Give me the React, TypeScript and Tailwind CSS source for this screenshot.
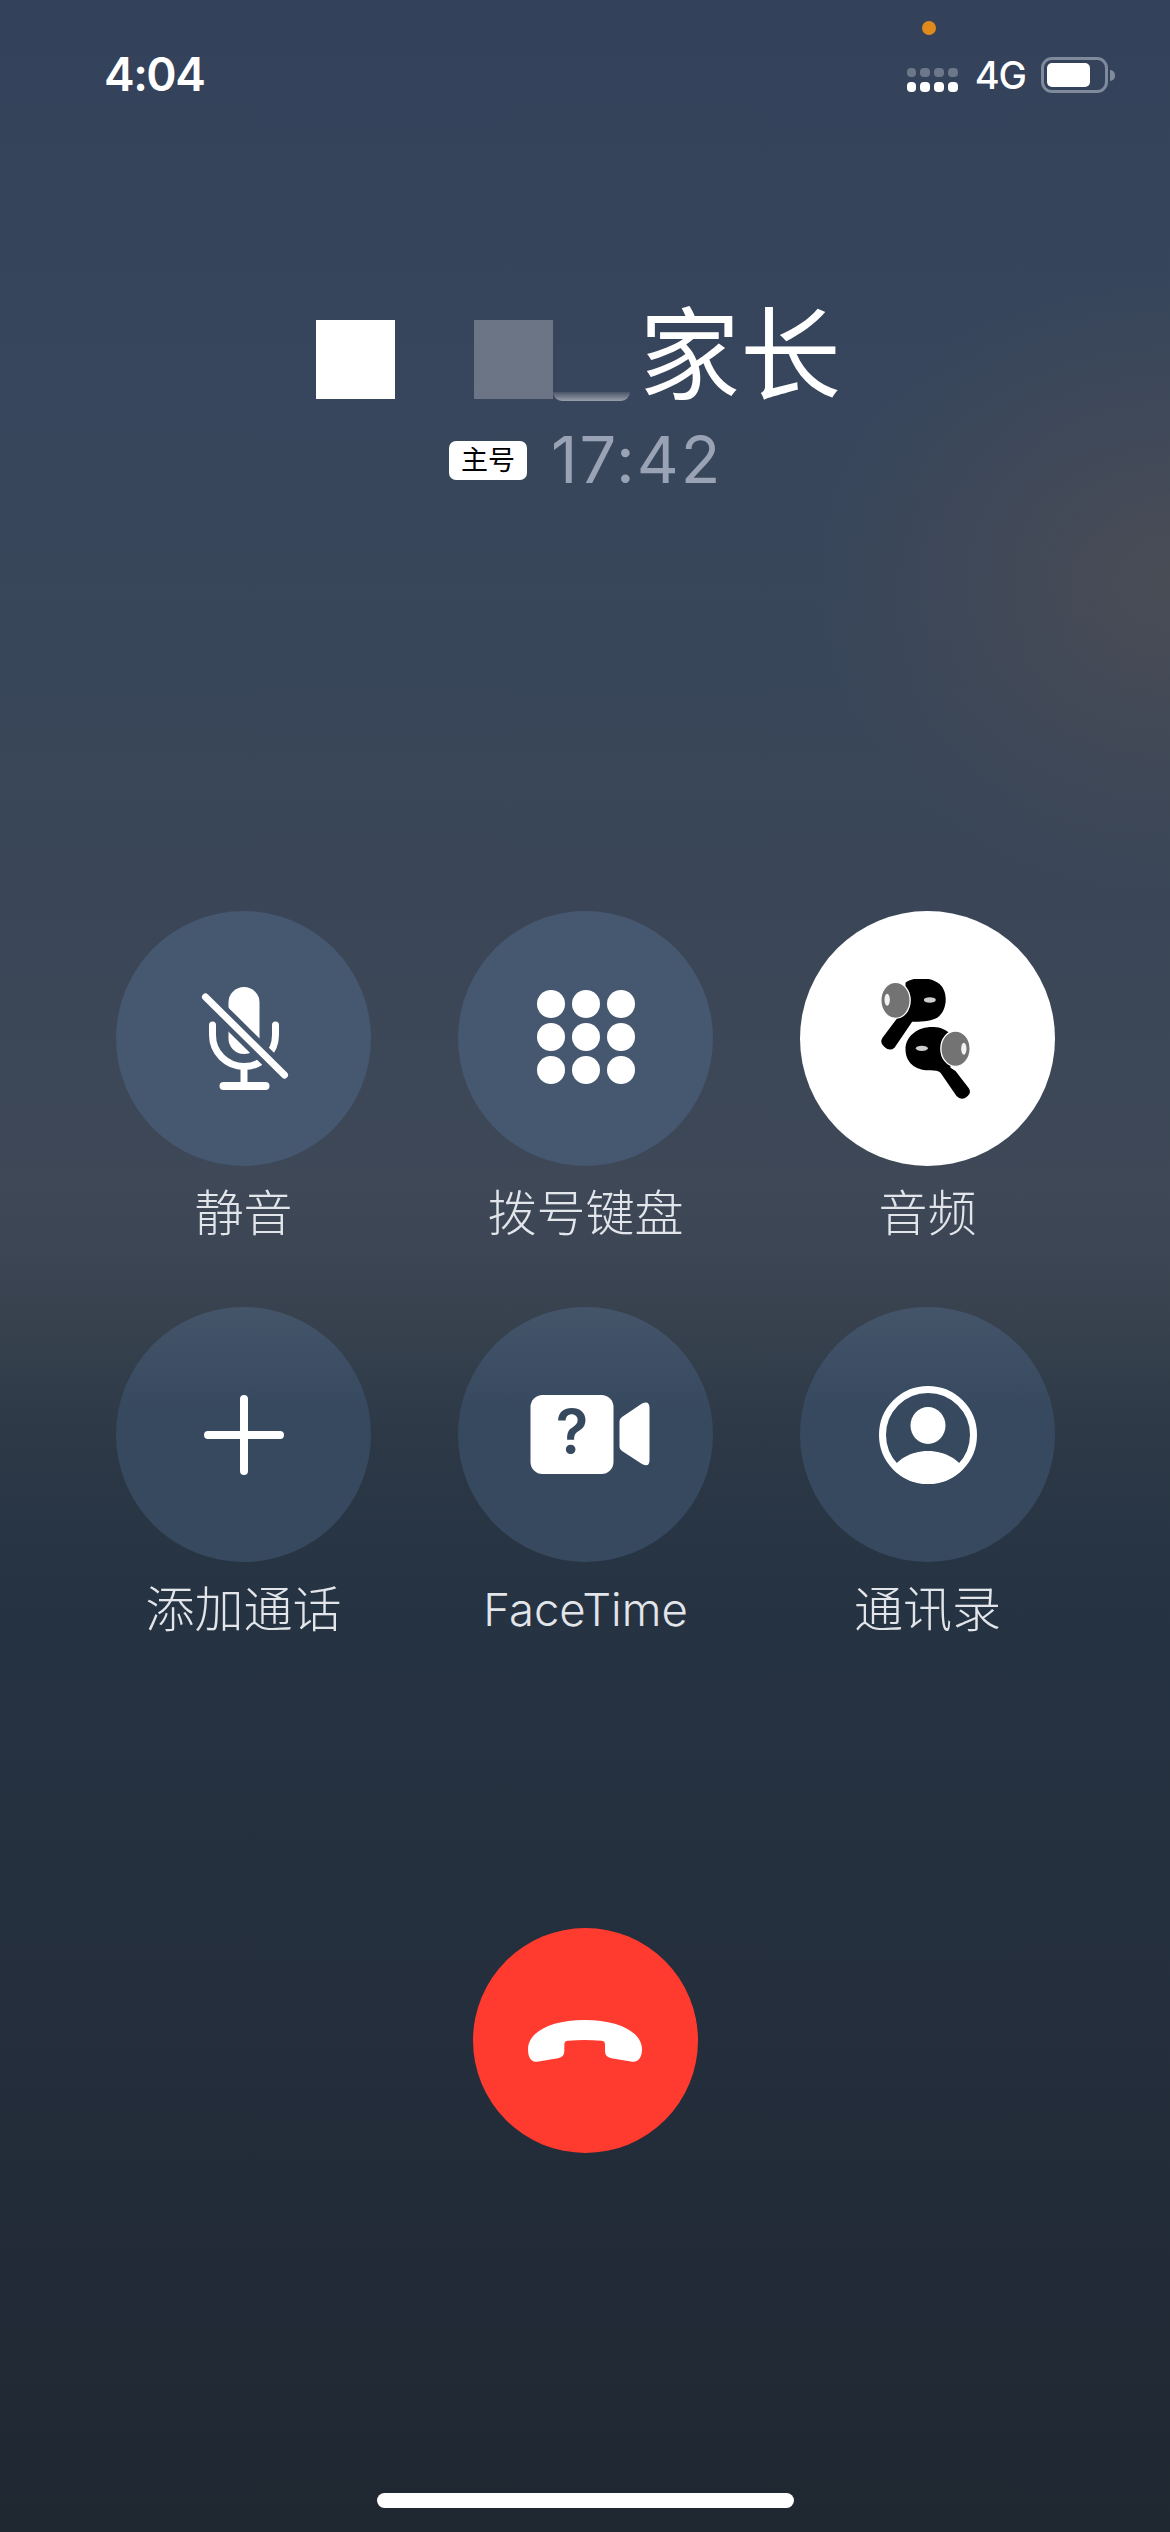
const MUTE_BG = "#465770"

function MuteIcon() {
  return (
    <svg viewBox="0 0 120 120" className="w-[120px] h-[120px] overflow-visible" fill="none">
      <rect x="44.5" y="8" width="31" height="67" rx="15.5" fill="#fff" />
      <path d="M28.5 46V56a31.5 31.5 0 0 0 63 0V46" stroke="#fff" strokeWidth="7" strokeLinecap="round" />
      <path d="M60 88V104" stroke="#fff" strokeWidth="7" />
      <rect x="35.5" y="103" width="50" height="8" rx="4" fill="#fff" />
      <path d="M21.5 18L100.5 96" stroke={MUTE_BG} strokeWidth="17" />
      <path d="M21.5 18L100.5 96" stroke="#fff" strokeWidth="7" strokeLinecap="round" />
    </svg>
  )
}

function KeypadIcon() {
  const xs = [25, 60, 95]
  const ys = [25, 58, 91]
  return (
    <svg viewBox="0 0 120 120" className="w-[120px] h-[120px]" fill="#fff">
      {ys.map((y) => xs.map((x) => <circle key={`${x}-${y}`} cx={x} cy={y} r="14" />))}
    </svg>
  )
}

function AirPodsIcon() {
  return (
    <svg viewBox="262.5 234 360 360" className="w-[120px] h-[120px]">
      <path
        d="M375 245C395 228 450 225 478 250C505 275 500 330 470 350C450 362 415 362 395 362L342 440Q328 452 312 438Q296 425 306 410L350 352L375 300Z"
        fill="#000"
      />
      <ellipse cx="345" cy="298" rx="44" ry="54" fill="#737373" stroke="#fff" strokeWidth="4" />
      <ellipse cx="320" cy="296" rx="8" ry="18" fill="#f2f2f2" />
      <ellipse cx="448" cy="297" rx="18" ry="8" fill="#cfcfcf" />
      <path
        d="M375 445C375 400 420 375 460 378C480 378 500 388 510 400L510 500L525 510L565 562Q575 578 555 590Q540 598 528 585L480 515Q470 508 450 508C405 510 375 485 375 445Z"
        fill="#000"
      />
      <ellipse cx="525" cy="443" rx="44" ry="53" fill="#737373" stroke="#fff" strokeWidth="4" />
      <ellipse cx="550" cy="443" rx="8" ry="18" fill="#f2f2f2" />
      <ellipse cx="424" cy="442" rx="18" ry="8" fill="#cfcfcf" />
    </svg>
  )
}

function PlusIcon() {
  return (
    <svg viewBox="0 0 120 120" className="w-[120px] h-[120px]" fill="none">
      <path d="M24 60H96M60 24V96" stroke="#fff" strokeWidth="8" strokeLinecap="round" />
    </svg>
  )
}

function FaceTimeIcon() {
  return (
    <svg viewBox="0 0 120 120" className="w-[120px] h-[120px] overflow-visible">
      <rect x="4.5" y="20" width="83" height="79" rx="12" fill="#fff" />
      <path d="M93.5 46Q93.5 44 96 42L116 28.5Q123.5 25 123.5 33V85Q123.5 93 116 89L96 76Q93.5 74 93.5 72Z" fill="#fff" />
      <text x="46" y="78" textAnchor="middle" fontSize="60" fontWeight="600" fill="#37495f">
        ?
      </text>
    </svg>
  )
}

function ContactIcon() {
  return (
    <svg viewBox="0 0 120 120" className="w-[120px] h-[120px]" fill="none">
      <circle cx="60" cy="60" r="45.5" stroke="#fff" strokeWidth="7" />
      <ellipse cx="60" cy="50.5" rx="17.5" ry="18.5" fill="#fff" />
      <path d="M60 76C42 76 28 86 25 94A49 49 0 0 0 95 94C92 86 78 76 60 76Z" fill="#fff" />
    </svg>
  )
}

const lowerCircle = "bg-[linear-gradient(180deg,#44556a_0%,#37495f_40%,#36495f_100%)]"

const actions = [
  { label: "静音", icon: <MuteIcon />, circle: "bg-[#465770]", text: "text-[49px]" },
  { label: "拨号键盘", icon: <KeypadIcon />, circle: "bg-[#465770]", text: "text-[49px]" },
  { label: "音频", icon: <AirPodsIcon />, circle: "bg-white", text: "text-[49px]" },
  { label: "添加通话", icon: <PlusIcon />, circle: lowerCircle, text: "text-[49px]" },
  { label: "FaceTime", icon: <FaceTimeIcon />, circle: lowerCircle, text: "text-[45.5px]" },
  { label: "通讯录", icon: <ContactIcon />, circle: lowerCircle, text: "text-[49px]" },
]

function SignalDots() {
  return (
    <div className="grid grid-cols-4 gap-x-[4px] gap-y-[5px] w-[51px]">
      {[0, 1, 2, 3].map((i) => (
        <div key={i} className="h-[9px] rounded-[4px] bg-[#6c778a]" />
      ))}
      {[0, 1, 2, 3].map((i) => (
        <div key={i} className="h-[10px] rounded-[4px] bg-white" />
      ))}
    </div>
  )
}

export default function App() {
  return (
    <div className="relative w-[1170px] h-[2532px] overflow-hidden font-['Inter','Noto_Sans_CJK_SC',sans-serif] bg-[linear-gradient(180deg,#33415a_0%,#37465c_16%,#3a4657_36%,#3e4857_47%,#38424f_52%,#2c3846_57%,#263342_63%,#242e3c_80%,#1f2731_100%)]">
      <div className="absolute right-[-350px] top-[270px] w-[700px] h-[620px] rounded-full bg-[radial-gradient(closest-side,rgba(90,82,80,0.5),rgba(90,82,80,0))]" />

      <div className="relative">
        {/* status bar */}
        <div className="h-[120px]">
          <div className="absolute left-[922px] top-[21px] w-[14px] h-[14px] rounded-full bg-[#e08a1c]" />
          <div className="flex items-start justify-between pl-[104px] pr-[55px] pt-[45px]">
            <span className="text-[46px] leading-[58px] font-semibold text-white tracking-[-1.5px]">4:04</span>
            <div className="flex items-center pt-[10px]">
              <div className="pt-[10px]">
                <SignalDots />
              </div>
              <span className="ml-[17px] text-[38px] leading-[40px] font-medium text-white tracking-[-1px]">4G</span>
              <div className="ml-[15px] w-[67px] h-[36px] rounded-[11px] border-[3px] border-[#7f8a9c] p-[3px]">
                <div className="w-[43px] h-full rounded-[5px] bg-white" />
              </div>
              <div className="ml-[2px] w-[5px] h-[11px] rounded-r-full bg-[#7f8a9c]" />
            </div>
          </div>
        </div>

        {/* caller name, the first part is masked out */}
        <div className="mt-[184px] flex items-start pl-[316px] h-[102px]">
          <div className="mt-[16px] w-[79px] h-[79px] bg-white" />
          <div className="mt-[16px] ml-[79px] w-[79px] h-[79px] bg-[#6b7585]" />
          <div className="mt-[88px] w-[77px] h-[9px] rounded-b-[14px] bg-[linear-gradient(180deg,#4a5568,#979eac)]" />
          <span className="ml-[9px] text-[101px] leading-[102px] font-normal text-white">家长</span>
        </div>

        {/* sim badge + duration */}
        <div className="mt-[28px] flex items-center pl-[449px] h-[52px]">
          <div className="w-[78px] h-[39px] rounded-[7px] bg-white flex items-center justify-center text-[27px] font-normal leading-none text-black">
            主号
          </div>
          <span className="ml-[24px] text-[65px] leading-[52px] font-normal tracking-[2px] text-[#9aa3b5]">17:42</span>
        </div>

        {/* call actions */}
        <div className="mt-[425px] pl-[116px] grid grid-cols-[255px_255px_255px] gap-x-[87px] gap-y-[69px]">
          {actions.map((a) => (
            <div key={a.label} className="flex flex-col items-center">
              <div className={`w-[255px] h-[255px] rounded-full flex items-center justify-center ${a.circle}`}>{a.icon}</div>
              <span className={`mt-[24px] h-[48px] leading-[48px] font-light text-[#e2e5ea] whitespace-nowrap ${a.text}`}>
                {a.label}
              </span>
            </div>
          ))}
        </div>

        {/* end call */}
        <div className="mt-[294px] flex justify-center">
          <div className="w-[225px] h-[225px] rounded-full bg-[#ff3b30] flex items-center justify-center">
            <svg viewBox="235 332 342 126" className="w-[114px] h-[42px]" fill="#fff">
              <path d="M235 420C235 370 300 332 405 332C510 332 577 370 577 420C577 445 565 460 548 457L485 447Q466 443 466 425V405Q466 395 455 394Q405 390 355 394Q344 395 344 405V425Q344 443 325 447L262 457C245 460 235 445 235 420Z" />
            </svg>
          </div>
        </div>

        {/* home indicator */}
        <div className="mt-[340px] mx-auto w-[417px] h-[15px] rounded-full bg-white" />
      </div>
    </div>
  )
}
